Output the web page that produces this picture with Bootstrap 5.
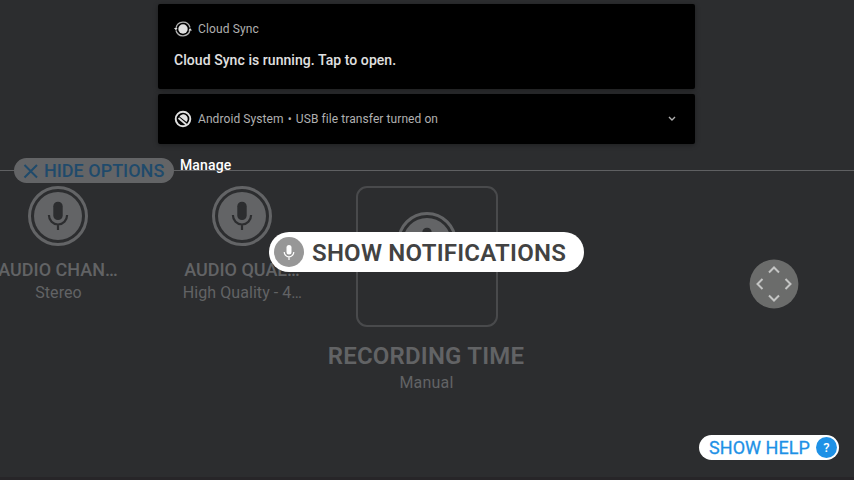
<!DOCTYPE html>
<html lang="en">
<head>
<meta charset="utf-8">
<meta name="viewport" content="width=device-width, initial-scale=1">
<title>Recorder options</title>
<link href="https://cdn.jsdelivr.net/npm/bootstrap@5.3.0/dist/css/bootstrap.min.css" rel="stylesheet">
<style>
body{width:854px;height:480px;background:#2c2d2f;font-family:Roboto,"Liberation Sans",sans-serif;color:#626365;line-height:1}
.screen{width:854px;height:480px;border-bottom:3px solid #272528}
.t{white-space:nowrap;line-height:1}
.options-panel{margin-top:170px;border-top:1px solid #5f6062}
.options-row{margin-left:-34px;padding-top:15px}
.option{width:184px}
.option .ring{width:60px;height:60px}
.option-title{font-size:18px;font-weight:500;margin-top:15px}
.option-value{font-size:16px;margin-top:6px;letter-spacing:.06px;padding-left:1px}
.focus-option{width:200px;margin-left:-8px}
.focus-box{width:142px;height:141px;border:2px solid #494a4c;border-radius:11px;padding-top:24px;margin-left:2px}
.focus-title{font-size:24px;font-weight:600;letter-spacing:.2px;margin-top:17px}
.focus-value{font-size:16px;margin-top:7px;letter-spacing:.2px;padding-left:1px}
.hide-pill{left:14px;top:158px;width:160px;height:25px;background:#636466;color:#1f4a6b;font-size:18px;font-weight:500;padding-left:9px}
.hide-label{margin-left:5px}
.shade{left:158px;top:4px;width:537px;color:#b0b0b0;font-size:12px;letter-spacing:.13px}
.notice{background:#000;border-radius:2px;box-shadow:0 1px 5px rgba(0,0,0,.35);padding:0 16px}
.notice-open{height:85px;padding-top:16px}
.notice-line{height:50px;margin-top:5px;letter-spacing:.08px}
.notice-icon{margin-right:6px}
.notice-chevron{margin-right:3px}
.dot{padding:0 1px}
.notice-body{font-size:14px;font-weight:500;color:#e0e0e0;margin-top:15px;letter-spacing:.06px}
.manage{margin:14px 0 0 22px;font-size:14px;font-weight:500;color:#fff}
.toast-pill{left:269px;top:232px;width:315px;height:40px;background:#fff;color:#424242;font-size:24px;font-weight:600;letter-spacing:.23px;padding-left:5px}
.toast-label{padding-top:2px}
.dpad{left:750px;top:260px}
.help-pill{left:699px;top:435px;width:140px;height:25px;background:#fff;color:#1e91e6;font-size:18px;padding-left:10px}
.help-label{-webkit-text-stroke:.3px #1e91e6;letter-spacing:.05px}
.help-mark{width:21px;height:21px;background:#1e91e6;color:#fff;font-size:13px;font-weight:500;margin-right:2px}
</style>
</head>
<body class="overflow-hidden">
<svg class="d-none">
  <symbol id="mic" viewBox="0 0 60 60">
    <circle cx="30" cy="30" r="28.500" fill="none" stroke="#636466" stroke-width="3"/>
    <circle cx="30" cy="30" r="24" fill="#636466"/>
    <rect x="25.300" y="15.700" width="9.400" height="18.300" rx="4.600" fill="#2c2d2f"/>
    <path d="M20.900 29a9.100 9.500 0 0 0 18.200 0M30 38.500V44" fill="none" stroke="#2c2d2f" stroke-width="2.200"/>
  </symbol>
</svg>
<main class="screen position-relative overflow-hidden">
  <div class="d-flex flex-column h-100">
    <section class="options-panel">
      <div class="options-row d-flex align-items-start">
        <div class="option d-flex flex-column align-items-center">
          <svg class="ring"><use href="#mic"/></svg>
          <div class="t option-title">AUDIO CHAN…</div>
          <div class="t option-value">Stereo</div>
        </div>
        <div class="option d-flex flex-column align-items-center">
          <svg class="ring"><use href="#mic"/></svg>
          <div class="t option-title">AUDIO QUAL…</div>
          <div class="t option-value">High Quality - 4…</div>
        </div>
        <div class="focus-option d-flex flex-column align-items-center">
          <div class="focus-box d-flex justify-content-center"><svg width="60" height="60"><use href="#mic"/></svg></div>
          <div class="t focus-title">RECORDING TIME</div>
          <div class="t focus-value">Manual</div>
        </div>
      </div>
    </section>
  </div>

  <div class="hide-pill position-absolute rounded-pill d-flex align-items-center t">
    <svg width="16" height="16"><path d="M1.500 2l12.500 12.500M14 2L1.500 14.500" stroke="#1f4a6b" stroke-width="2" fill="none"/></svg>
    <span class="hide-label">HIDE OPTIONS</span>
  </div>

  <aside class="shade position-absolute">
    <div class="notice notice-open">
      <div class="d-flex align-items-center">
        <svg width="18" height="18" class="notice-icon" fill="none" stroke="#b0b0b0"><circle cx="9" cy="9" r="4.700" fill="#e0e0e0" stroke="none"/><path d="M2 8A7.200 7.200 0 0 1 16 7.500M16 10A7.200 7.200 0 0 1 2 10.500" stroke-width="1.300"/><path d="M0 8h3.500L2 10.500zM14.500 10.500H18L16 8z" fill="#e0e0e0" stroke="none"/></svg>
        <span class="t">Cloud Sync</span>
      </div>
      <div class="t notice-body">Cloud Sync is running. Tap to open.</div>
    </div>
    <div class="notice notice-line d-flex align-items-center">
      <svg width="18" height="18" class="notice-icon" fill="none" stroke="#e0e0e0"><circle cx="9" cy="9" r="7.300" stroke-width="1.900"/><path d="M5.500 6.500a4.400 4.400 0 0 1 7.600 4.500l-.6 1z" fill="#e0e0e0" stroke="none"/><path d="M4.500 8l8 6.800" stroke-width="1.800"/></svg>
      <span class="t">Android System<span class="dot">&nbsp;•&nbsp;</span>USB file transfer turned on</span>
      <svg width="8" height="6" class="notice-chevron ms-auto"><path d="M1 1l3 3 3-3" stroke="#b0b0b0" stroke-width="1.400" fill="none"/></svg>
    </div>
    <div class="t manage">Manage</div>
  </aside>

  <div class="toast-pill position-absolute rounded-pill d-flex align-items-center t">
    <svg width="30" height="30"><circle cx="15" cy="15" r="15" fill="#979797"/><rect x="12.500" y="8" width="5" height="9.500" rx="2.500" fill="#fff"/><path d="M10.200 15a4.800 4.800 0 0 0 9.600 0M15 20v3" stroke="#fff" stroke-width="1.200" fill="none"/></svg>
    <span class="toast-label ms-2">SHOW NOTIFICATIONS</span>
  </div>

  <svg class="dpad position-absolute overflow-visible" width="48" height="48"><circle cx="24" cy="24" r="24.400" fill="#6b6c6b"/><path d="M19 12.500l5-5 5 5M19 35.500l5 5 5-5M12.500 19l-5 5 5 5M35.500 19l5 5-5 5" fill="none" stroke="#c4c5c4" stroke-width="2"/></svg>

  <div class="help-pill position-absolute rounded-pill d-flex align-items-center t">
    <span class="help-label">SHOW HELP</span>
    <span class="help-mark rounded-circle d-flex align-items-center justify-content-center ms-auto">?</span>
  </div>
</main>
<script src="https://cdn.jsdelivr.net/npm/bootstrap@5.3.0/dist/js/bootstrap.bundle.min.js"></script>
</body>
</html>
